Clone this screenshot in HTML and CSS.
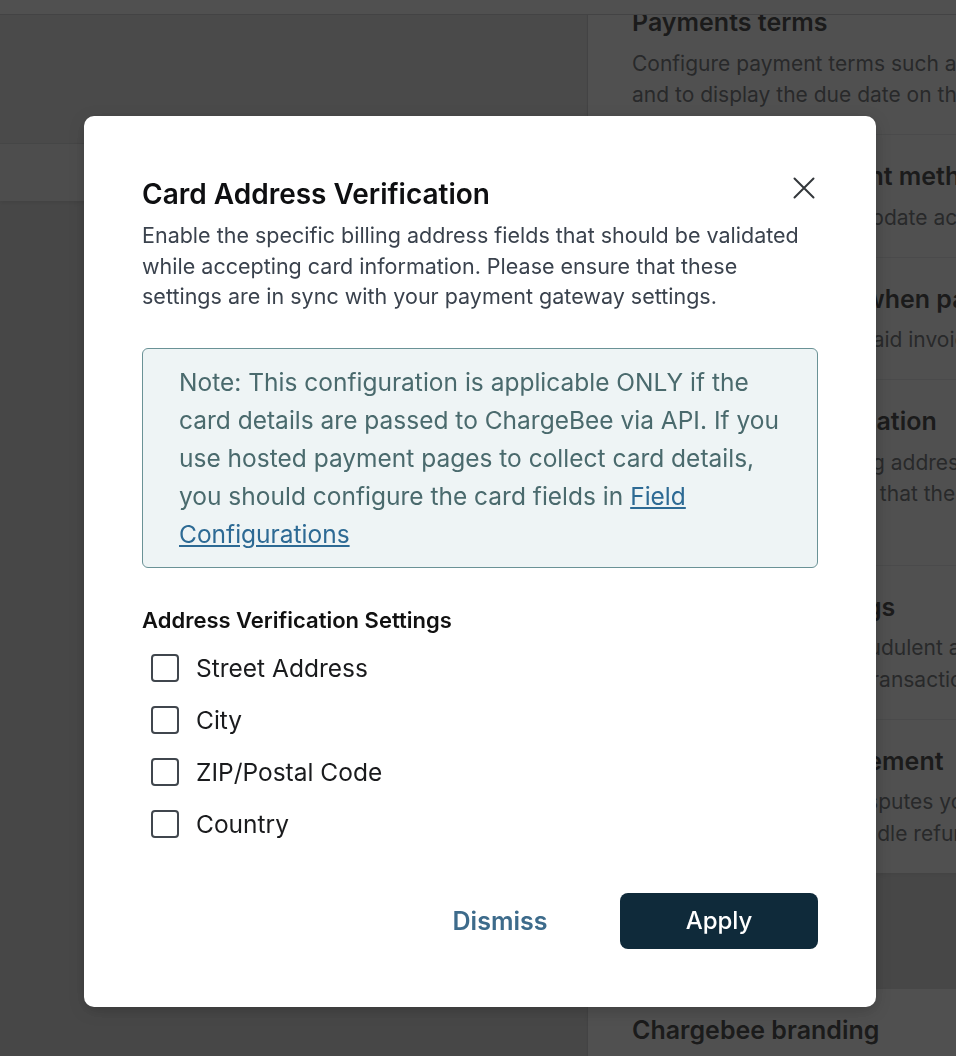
FILE: index.html
```html
<!DOCTYPE html>
<html lang="en">
<head>
    <meta charset="UTF-8">
    <meta name="viewport" content="width=device-width, initial-scale=1.0">
    <title>Payments settings</title>
    <link rel="stylesheet" href="styles.css">
</head>
<body>
    <div class="topbar"></div>

    <div class="page">
        <div class="main">
            <div class="main-head"></div>
            <div class="main-tabs"></div>
        </div>

        <aside class="settings">
            <div class="settings-group">
                <div class="setting">
                    <h3>Payments terms</h3>
                    <p>Configure payment terms such as Net 15 or Net 30, and to display the due date on the invoice.</p>
                </div>
                <div class="setting">
                    <h3>Update your payment methods</h3>
                    <p>Let customers directly update account details.</p>
                </div>
                <div class="setting">
                    <h3>Remind customers when payment fails</h3>
                    <p>Send a reminder for unpaid invoices by email.</p>
                </div>
                <div class="setting">
                    <h3>Card address verification</h3>
                    <p>Enable the specific billing address fields to be validated. Please ensure that these are in sync with your gateway.</p>
                </div>
                <div class="setting">
                    <h3>Fraud control settings</h3>
                    <p>Automatically detect fraudulent activity and flag high-risk or suspicious transactions.</p>
                </div>
                <div class="setting">
                    <h3>Chargeback management</h3>
                    <p>Track and respond to disputes you receive from customers early and handle refunds.</p>
                </div>
            </div>
            <div class="settings-group">
                <div class="setting">
                    <h3>Chargebee branding</h3>
                    <p>Show or hide the Chargebee logo on your hosted pages and emails.</p>
                </div>
            </div>
        </aside>
    </div>

    <div class="backdrop">
        <div class="modal" role="dialog">
            <div class="modal-head">
                <h2>Card Address Verification</h2>
                <button class="close" aria-label="Close">
                    <svg width="22" height="22" viewBox="0 0 22 22"><path d="M1.5 1.5 L20.5 20.5 M20.5 1.5 L1.5 20.5" stroke="#33373b" stroke-width="2" stroke-linecap="round" fill="none"/></svg>
                </button>
            </div>
            <p class="modal-desc">Enable the specific billing address fields that should be validated while accepting card information. Please ensure that these settings are in sync with your payment gateway settings.</p>

            <div class="note">
                Note: This configuration is applicable ONLY if the card details are passed to ChargeBee via API. If you use hosted payment pages to collect card details, you should configure the card fields in <a href="#">Field Configurations</a>
            </div>

            <h4 class="group-title">Address Verification Settings</h4>
            <label class="check"><input type="checkbox"> Street Address</label>
            <label class="check"><input type="checkbox"> City</label>
            <label class="check"><input type="checkbox"> ZIP/Postal Code</label>
            <label class="check"><input type="checkbox"> Country</label>

            <div class="modal-foot">
                <button class="btn-link">Dismiss</button>
                <button class="btn-primary">Apply</button>
            </div>
        </div>
    </div>
</body>
</html>
```

FILE: styles.css
```css
* { box-sizing: border-box; }
body { margin: 0; height: 100vh; overflow: hidden; font-family: Inter, "Noto Sans", sans-serif; background: #d6d6d6; }

/* page under the dialog */
.topbar { position: fixed; top: 0; left: 0; right: 0; height: 15px; background: #fff; border-bottom: 1px solid #bfc1c4; z-index: 1; }
.page { display: flex; width: 1195px; }
.main { flex: none; width: 587px; }
.main-head { height: 144px; background: #e4e4e4; border-bottom: 1px solid #cfd0d2; }
.main-tabs { height: 57px; background: #f2f2f2; box-shadow: 0 2px 4px rgba(0,0,0,.12); }
.settings { flex: none; width: 608px; margin-top: -19px; border-left: 1px solid #c9cacc; }
.settings-group { background: #fff; box-shadow: 0 2px 4px rgba(0,0,0,.1); }
.settings-group + .settings-group { margin-top: 116px; }
.setting { padding: 25px 44px 23.5px; border-top: 1px solid #e2e4e7; }
.setting:first-child { border-top: 0; }
.setting h3 { margin: 0 0 9.5px; font-size: 25px; line-height: 32px; font-weight: 600; color: #050505; }
.setting p { margin: 0; font-size: 21px; line-height: 31.5px; color: #45494e; }

/* dialog */
.backdrop { position: fixed; inset: 0; z-index: 2; padding: 116px 0 0 84px; background: rgba(33,33,33,.79); }
.modal { width: 792px; padding: 58px; background: #fff; border-radius: 10px; box-shadow: 0 4px 16px rgba(0,0,0,.2); }
.modal-head { display: flex; justify-content: space-between; align-items: flex-start; }
.modal-head h2 { margin: 0; font-size: 28px; line-height: 40px; font-weight: 600; color: #0e0f11; }
.close { display: flex; align-items: center; justify-content: center; width: 28px; height: 28px; padding: 0; border: 0; background: none; cursor: pointer; }
.modal-desc { margin: 6px 0 0; font-size: 21.5px; line-height: 30.5px; color: #3a424d; }

.note { margin-top: 36px; padding: 14px 36px; background: #eef4f5; border: 1px solid #6a9296; border-radius: 6px; font-size: 24.5px; line-height: 38px; color: #4a6a6d; }
.note a { color: #2d6a94; }

.group-title { margin: 38px 0 8px; font-size: 22px; line-height: 28px; font-weight: 600; color: #111; }
.check { display: flex; align-items: center; gap: 17px; height: 52px; padding-left: 9px; font-size: 24.5px; color: #1a1b1d; }
.check input { appearance: none; margin: 0; width: 28px; height: 28px; border: 2px solid #40464d; border-radius: 4px; background: #fff; }

.modal-foot { display: flex; justify-content: flex-end; align-items: center; gap: 40px; margin-top: 43px; }
.btn-link { width: 160px; height: 56px; padding: 0; border: 0; background: none; font-family: inherit; font-size: 25px; font-weight: 600; color: #3d6b8b; cursor: pointer; }
.btn-primary { width: 198px; height: 56px; padding: 0; border: 0; border-radius: 8px; background: #0f2a3a; font-family: inherit; font-size: 24px; font-weight: 500; color: #fff; cursor: pointer; }
```
